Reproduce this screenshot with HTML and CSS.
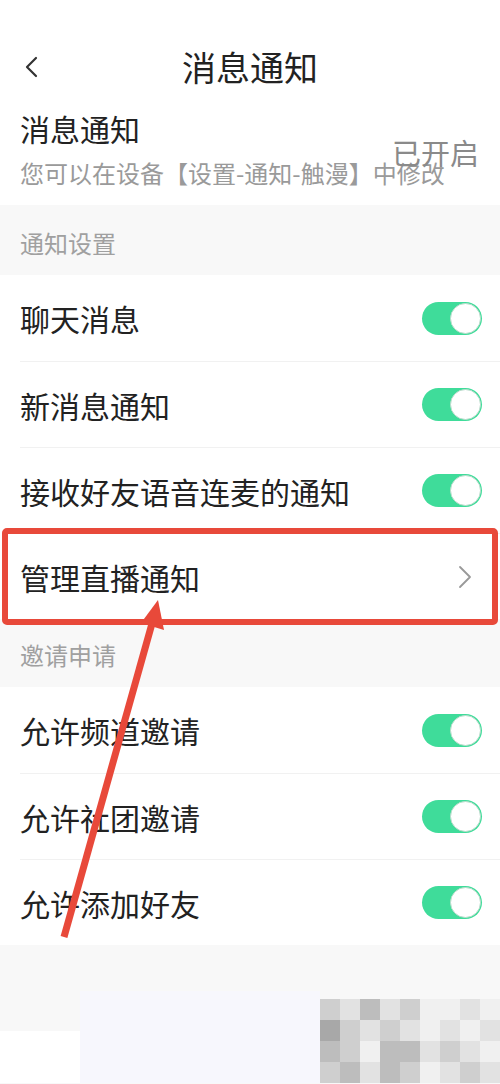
FILE: index.html
```html
<!DOCTYPE html>
<html lang="zh">
<head>
<meta charset="utf-8">
<title>消息通知</title>
<link rel="stylesheet" href="styles.css">
</head>
<body>
<div class="page">
  <header class="header">
    <span class="back"><svg width="14" height="22" viewBox="0 0 14 22"><path d="M12 2 L3 11 L12 20" fill="none" stroke="#333" stroke-width="2.2" stroke-linecap="round" stroke-linejoin="round"/></svg></span>
    <h1 class="title">消息通知</h1>
    <span class="spacer"></span>
  </header>

  <section class="info">
    <div class="info-title">消息通知</div>
    <div class="info-sub">您可以在设备【设置-通知-触漫】中修改</div>
    <span class="status">已开启</span>
  </section>

  <div class="group-head">通知设置</div>
  <div class="list">
    <div class="row"><div class="row-inner"><span class="label">聊天消息</span><span class="toggle"><span class="knob"></span></span></div></div>
    <div class="row"><div class="row-inner line"><span class="label">新消息通知</span><span class="toggle"><span class="knob"></span></span></div></div>
    <div class="row"><div class="row-inner line"><span class="label">接收好友语音连麦的通知</span><span class="toggle"><span class="knob"></span></span></div></div>
    <div class="row"><div class="row-inner line"><span class="label">管理直播通知</span><span class="chev"><svg width="14" height="24" viewBox="0 0 14 24"><path d="M2 2 L12 12 L2 22" fill="none" stroke="#999" stroke-width="1.8" stroke-linecap="round" stroke-linejoin="round"/></svg></span></div></div>
  </div>

  <div class="group-head second">邀请申请</div>
  <div class="list">
    <div class="row"><div class="row-inner"><span class="label">允许频道邀请</span><span class="toggle"><span class="knob"></span></span></div></div>
    <div class="row"><div class="row-inner line"><span class="label">允许社团邀请</span><span class="toggle"><span class="knob"></span></span></div></div>
    <div class="row"><div class="row-inner line"><span class="label">允许添加好友</span><span class="toggle"><span class="knob"></span></span></div></div>
  </div>

  <div class="footer">
    <div class="fcol c1"><div class="fgrey h86"></div><div class="fwhite"></div></div>
    <div class="fcol c2"><div class="fgrey h46"></div><div class="flav"></div></div>
    <div class="fcol c3"><div class="fgrey h54"></div>
      <div class="mosaic">
        <i class="g3"></i><i class="g4"></i><i class="g2"></i><i class="g4"></i><i class="g3"></i><i class="g5"></i><i class="g5"></i><i class="g4"></i><i class="g5"></i>
        <i class="g1"></i><i class="g3"></i><i class="g4"></i><i class="g3"></i><i class="g4"></i><i class="g5"></i><i class="g4"></i><i class="g5"></i><i class="g4"></i>
        <i class="g2"></i><i class="g3"></i><i class="g5"></i><i class="g2"></i><i class="g2"></i><i class="g4"></i><i class="g3"></i><i class="g4"></i><i class="g5"></i>
        <i class="g3"></i><i class="g2"></i><i class="g4"></i><i class="g2"></i><i class="g3"></i><i class="g5"></i><i class="g4"></i><i class="g3"></i><i class="g4"></i>
      </div>
    </div>
  </div>

  <div class="highlight"></div>
  <svg class="arrow" width="500" height="1084" viewBox="0 0 500 1084">
    <line x1="64" y1="937" x2="153" y2="620" stroke="#e8493a" stroke-width="7" stroke-linecap="butt"/>
    <polygon points="158,600 164,630 141,623" fill="#e8493a"/>
  </svg>
</div>
</body>
</html>
```

FILE: styles.css
```css
* { box-sizing: border-box; }
html, body { margin: 0; padding: 0; }
body {
  background: #f8f8f8;
  font-family: "Noto Sans CJK SC", "Noto Sans", sans-serif;
  color: #222;
}
.page {
  position: relative;
  width: 500px;
  height: 1084px;
  overflow: hidden;
  background: #f8f8f8;
}
.header {
  background: #fff;
  height: 100px;
  padding-top: 34px;
  display: grid;
  grid-template-columns: 60px 1fr 60px;
  align-items: center;
}
.back {
  display: flex;
  align-items: center;
  padding-left: 24px;
  height: 66px;
}
.title {
  margin: 0;
  text-align: center;
  font-size: 34px;
  font-weight: 400;
  line-height: 66px;
  color: #222;
}
.info {
  position: relative;
  background: #fff;
  padding: 8px 20px 17px;
  height: 105px;
}
.info-title {
  font-size: 30px;
  line-height: 40px;
  color: #222;
}
.info-sub {
  margin-top: 10px;
  font-size: 24px;
  line-height: 30px;
  color: #9a9a9a;
  white-space: nowrap;
}
.status {
  position: absolute;
  right: 21px;
  top: 32px;
  font-size: 29px;
  line-height: 40px;
  color: #8a8a8a;
}
.group-head {
  height: 70px;
  padding: 6px 0 0 20px;
  font-size: 24px;
  line-height: 64px;
  color: #a0a0a0;
  background: #f8f8f8;
}
.group-head.second {
  height: 68px;
  padding-top: 4px;
}
.list { background: #fff; }
.row {
  height: 86px;
  padding-left: 20px;
}
.row-inner {
  height: 86px;
  display: flex;
  align-items: center;
  justify-content: space-between;
  padding-right: 18px;
}
.row-inner.line { border-top: 1px solid #f1f1f1; }
.label {
  font-size: 30px;
  line-height: 40px;
  color: #222;
}
.toggle {
  position: relative;
  width: 60px;
  height: 33px;
  border-radius: 17px;
  background: #3fdc9a;
  margin-right: 0;
}
.knob {
  position: absolute;
  right: 1px;
  top: 1px;
  width: 31px;
  height: 31px;
  border-radius: 50%;
  background: #fff;
  border: 1px solid #b9dccb;
}
.chev {
  display: flex;
  align-items: center;
  margin-right: 10px;
}
.footer {
  display: grid;
  grid-template-columns: 80px 240px 180px;
  height: 138px;
}
.fcol { display: flex; flex-direction: column; }
.fgrey { background: #f8f8f8; }
.h86 { height: 86px; }
.h46 { height: 46px; }
.h54 { height: 54px; }
.fwhite { flex: 1; background: #fff; }
.flav { flex: 1; background: #f7f7fd; }
.mosaic {
  flex: 1;
  display: grid;
  grid-template-columns: repeat(9, 1fr);
  grid-template-rows: repeat(4, 1fr);
}
.mosaic i { display: block; }
.g1 { background: #a8a8a8; }
.g2 { background: #bdbdbd; }
.g3 { background: #cfcfcf; }
.g4 { background: #e2e2e2; }
.g5 { background: #f0f0f0; }
.highlight {
  position: absolute;
  left: 2px;
  top: 528px;
  width: 496px;
  height: 97px;
  border: 6px solid #e8493a;
  border-radius: 5px;
  pointer-events: none;
}
.arrow {
  position: absolute;
  left: 0;
  top: 0;
  pointer-events: none;
}
```
